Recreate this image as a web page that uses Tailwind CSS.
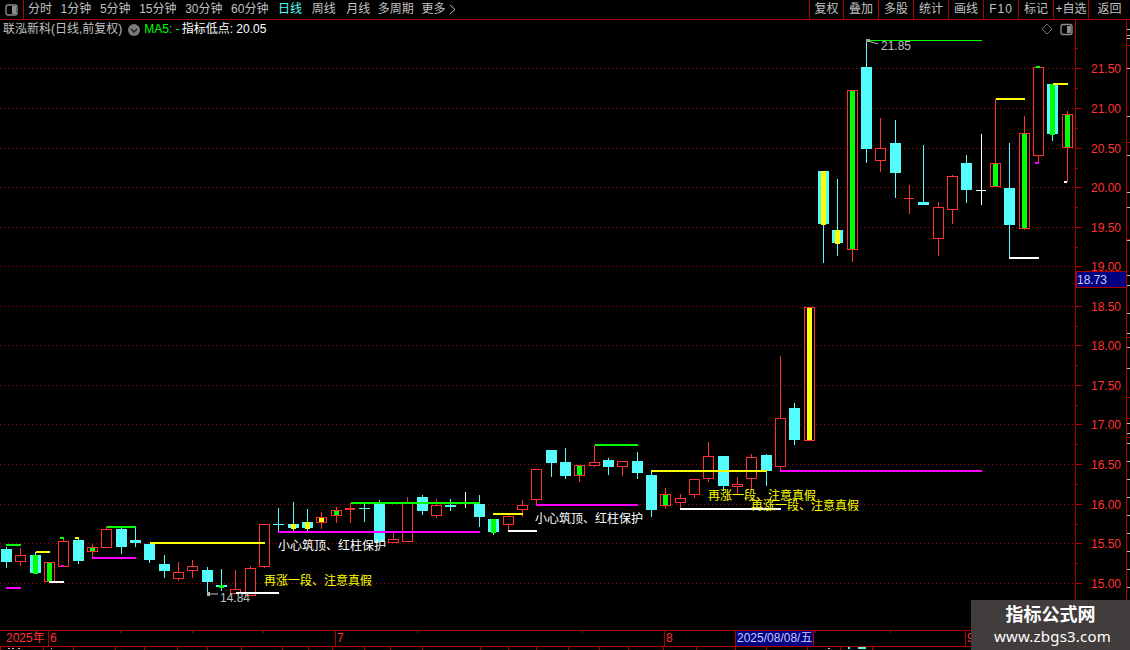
<!DOCTYPE html>
<html lang="en">
<head>
  <meta charset="UTF-8" />
  <title>联泓新科 日线</title>
  <script src="https://cdn.jsdelivr.net/npm/@tailwindcss/browser@4"></script>
</head>
<body class="bg-black font-['Liberation_Sans','Noto_Sans_CJK_SC',sans-serif] text-[12px] text-[#c0c0c0]">
  <div class="relative flex flex-col w-[1130px] h-[650px] overflow-hidden bg-black">

    <!-- top toolbar -->
    <header class="flex h-[20px] shrink-0 items-center border-b border-[#b00000] leading-[19px]">
      <div class="flex h-full w-[24px] shrink-0 items-center justify-center border-r border-[#b00000]">
        <svg width="13" height="12" viewBox="0 0 13 12"><rect x="1" y="1" width="11" height="10" rx="2" fill="none" stroke="#8c8c8c" stroke-width="1.4"/><rect x="7" y="2" width="4" height="8" fill="#8c8c8c"/></svg>
      </div>
      <nav class="flex items-center gap-[8.6px] pl-[4px]">
        <span>分时</span>
        <span>1分钟</span>
        <span>5分钟</span>
        <span>15分钟</span>
        <span>30分钟</span>
        <span>60分钟</span>
        <span class="ml-px text-[#54fcfc]">日线</span>
        <span class="ml-px">周线</span>
        <span class="ml-[2px]">月线</span>
        <span class="-ml-px">多周期</span>
        <span class="-ml-px flex items-center gap-[4px]">更多
          <svg width="7" height="11" viewBox="0 0 7 11"><path d="M1 1l5 4.5L1 10" fill="none" stroke="#c0c0c0"/></svg>
        </span>
      </nav>
      <div class="ml-auto flex h-full border-l border-[#b00000] text-center">
        <span class="w-[34px] border-r border-[#b00000]">复权</span>
        <span class="w-[35px] border-r border-[#b00000]">叠加</span>
        <span class="w-[35px] border-r border-[#b00000]">多股</span>
        <span class="w-[35px] border-r border-[#b00000]">统计</span>
        <span class="w-[35px] border-r border-[#b00000]">画线</span>
        <span class="w-[35px] border-r border-[#b00000] tracking-[1px]">F10</span>
        <span class="w-[35px] border-r border-[#b00000]">标记</span>
        <span class="w-[35px] border-r border-[#b00000] whitespace-nowrap">+自选</span>
        <span class="w-[41px]">返回</span>
      </div>
    </header>

    <!-- chart canvas, drawn in page coordinates -->
    <main class="relative h-[610px] shrink-0">
      <svg id="chart" class="block" width="1130" height="610" viewBox="0 20 1130 610" shape-rendering="crispEdges">
        <g id="grid" shape-rendering="geometricPrecision"></g>
        <g id="candles"></g>
        <g id="signals"></g>

        <g shape-rendering="auto" fill="#c0c0c0">
          <path d="M868 41l10 3" stroke="#c0c0c0" fill="none"/>
          <path d="M207 594h11M207 594l3-2M207 594l3 2" stroke="#c0c0c0" fill="none"/>
          <text x="881" y="50">21.85</text>
          <text x="220" y="602">14.84</text>
          <text x="264" y="585" fill="#ffff00">再涨一段、注意真假</text>
          <text x="278" y="550" fill="#ffffff">小心筑顶、红柱保护</text>
          <text x="535" y="523" fill="#ffffff">小心筑顶、红柱保护</text>
          <text x="708" y="500" fill="#ffff00">再涨一段、注意真假</text>
          <text x="751" y="510" fill="#ffff00">再涨一段、注意真假</text>
          <path d="M1047 24l5 5-5 5-5-5z" fill="none" stroke="#6e6e6e"/>
          <rect x="1061" y="24.5" width="11" height="10" rx="2" fill="none" stroke="#8c8c8c" stroke-width="1.4"/>
          <rect x="1067" y="26" width="4" height="7" fill="#8c8c8c"/>
        </g>

        <g id="axis"></g>
        <rect x="1076" y="271" width="50" height="16" fill="#000080" stroke="#b00000"/>
        <text x="1077" y="284" fill="#c8c8ff" shape-rendering="auto">18.73</text>
      </svg>

      <!-- legend row over the chart -->
      <div class="absolute left-[3px] top-[2px] flex items-center leading-[15px]">
        <span>联泓新科(日线,前复权)</span>
        <svg class="ml-[6px]" width="12" height="12" viewBox="0 0 12 12"><circle cx="6" cy="6" r="6" fill="#7a7a7a"/><path d="M3 5l3 3 3-3" fill="none" stroke="#1c1c1c" stroke-width="1.3"/></svg>
        <span class="ml-[4px] text-[#00ff00]">MA5: -</span>
        <span class="ml-[2px] text-white">指标低点: 20.05</span>
      </div>
    </main>

    <!-- date axis -->
    <footer class="relative flex h-[17px] shrink-0 border-y border-[#b00000] leading-[15px] text-[#ff3232]">
      <div class="w-[49px] border-r border-[#b00000] pl-[6px] whitespace-nowrap">2025年</div>
      <div class="w-[287px] border-r border-[#b00000] pl-[1px]">6</div>
      <div class="w-[329px] border-r border-[#b00000] pl-[1px]">7</div>
      <div class="w-[301px] border-r border-[#b00000] pl-[1px]">8</div>
      <div class="pl-[1px]">9</div>
      <svg class="absolute left-0 top-0" width="1130" height="2" shape-rendering="crispEdges">
        <path d="M120.5 0v2M192.5 0v2M263.5 0v2M417.5 0v2M582.5 0v2M815.5 0v2M890.5 0v2" stroke="#b00000"/>
      </svg>
      <div class="absolute left-[735px] top-0 h-[15px] w-[79px] border-x border-[#b00000] bg-[#000080] pl-px text-[#c8c8ff] whitespace-nowrap">2025/08/08/五</div>
    </footer>
    <svg class="block shrink-0" width="1130" height="3" shape-rendering="crispEdges">
      <path d="M0.5 0v3M43.5 0v3M73.5 0v3M115.5 0v3M144.5 0v3M177.5 0v3M207.5 0v3M241.5 0v3M282.5 0v3M308.5 0v3M332.5 0v3M364.5 0v3M390.5 0v3M422.5 0v3M480.5 0v3M508.5 0v3M536.5 0v3M568.5 0v3M599.5 0v3M628.5 0v3M663.5 0v3M696.5 0v3M735.5 0v3M766.5 0v3M807.5 0v3M840.5 0v3M872.5 0v3" stroke="#b00000"/>
      <path d="M8 1h2M12 1h2M18 1h2M51 1h1M828 1h2" stroke="#c0c0c0"/>
      <path d="M848 1h2M858 1h8" stroke="#54fcfc" stroke-width="2"/>
    </svg>

    <!-- site watermark -->
    <div class="absolute right-0 bottom-0 flex h-[50px] w-[159px] flex-col items-center bg-[#423d3d] text-white">
      <div class="mt-[3px] text-[18px] font-bold leading-[24px]">指标公式网</div>
      <div class="ml-[4px] font-['Noto_Sans',sans-serif] text-[15px] leading-[19px] tracking-[0.2px]">www.zbgs3.com</div>
    </div>
  </div>

  <script>
    const RED = "#ff3232", CYAN = "#54fcfc", GREEN = "#00ff00", YELLOW = "#ffff00", MAGENTA = "#ff00ff", WHITE = "#ffffff";
    const NS = "http://www.w3.org/2000/svg";

    function add(parent, tag, attrs, text) {
      const el = document.createElementNS(NS, tag);
      for (const k in attrs) el.setAttribute(k, attrs[k]);
      if (text) el.textContent = text;
      parent.appendChild(el);
      return el;
    }
    const box = (g, x, y, w, h, fill) => add(g, "rect", { x, y, width: w, height: h, fill });

    // price axis
    const prices = [["21.50",68],["21.00",108],["20.50",148],["20.00",187],["19.50",227],["19.00",266],["18.50",306],
                    ["18.00",345],["17.50",385],["17.00",424],["16.50",464],["16.00",504],["15.50",543],["15.00",583]];
    const grid = document.getElementById("grid");
    const axis = document.getElementById("axis");
    prices.forEach(([label, y], i) => {
      add(grid, "line", { x1: 0, x2: 1075, y1: y + .5, y2: y + .5, stroke: "#a00000", "stroke-dasharray": "1 3" });
      box(axis, 1075, y, 7, 1, "#b00000");
      box(axis, 1075, y + 20, 3, 1, "#b00000");
      add(axis, "text", { x: 1091, y: y + 5, fill: RED, "shape-rendering": "auto" }, label);
    });
    box(axis, 1075, 20, 1, 610, "#b00000");
    box(axis, 1075, 48, 3, 1, "#b00000");
    box(axis, 1126, 20, 1, 610, "#b00000");
    [45, 142, 239, 337, 397, 418, 437].forEach(y => box(axis, 1126, y, 4, 1, "#b00000"));
    [29,35,38,68,116,155,192,207,240,275,285,313,333,347,368,423,433,443,461,479,497,515,533,551,569,587]
      .forEach(y => box(axis, 1127, y, 3, 1, "#c0c0c0"));

    // left, top, bottom, wick top, wick bottom, kind (r hollow red, c cyan, f solid red, w white), inner bar
    const bars = [
      [1,549,562,547,568,"c"],[15,555,562,548,566,"r"],[30,555,573,552,573,"c",GREEN],[44,562,582,562,582,"r",GREEN],
      [58,541,567,538,567,"r"],[73,540,561,537,564,"c"],[87,547,552,544,557,"r",GREEN],[101,529,548,526,548,"r"],
      [116,529,547,528,554,"c"],[130,540,543,527,547,"c"],[144,544,560,544,563,"c"],[159,564,571,555,578,"c"],
      [173,572,579,562,581,"r"],[187,566,571,560,578,"r"],[202,570,582,567,596,"c"],[216,585,587,569,591,"c",GREEN],
      [230,589,594,570,594,"r"],[245,568,596,566,596,"r"],[259,524,567,524,568,"r"],[273,524,525,508,532,"c"],
      [288,524,528,502,532,"c",YELLOW],[302,522,528,509,532,"c",YELLOW],[316,517,523,512,529,"r",YELLOW],[331,510,516,507,523,"r",GREEN],
      [345,508,510,503,523,"f"],[359,508,509,503,522,"c"],[374,504,542,500,542,"c"],[388,539,543,532,543,"r"],
      [402,503,542,497,542,"r"],[417,497,511,495,515,"c"],[431,505,516,499,518,"r"],[445,505,507,499,511,"c"],
      [460,500,500,492,508,"w"],[474,504,517,495,527,"c"],[488,519,532,519,535,"c",GREEN],[503,516,525,513,531,"r"],
      [517,505,510,500,517,"r"],[531,469,500,469,504,"r"],[546,450,463,450,477,"c"],[560,462,476,448,479,"c"],
      [574,465,476,465,482,"r",GREEN],[589,462,466,445,467,"r"],[603,460,467,458,475,"c"],[617,461,467,461,476,"r"],
      [632,461,473,452,479,"c"],[646,475,510,471,517,"c"],[660,494,506,488,509,"r",GREEN],[675,498,503,494,509,"r"],
      [689,479,495,479,498,"r"],[703,456,479,442,482,"r"],[718,456,486,456,491,"c"],[732,484,487,477,495,"r"],
      [746,457,479,454,490,"r"],[761,455,471,454,486,"c"],[775,418,467,356,470,"r"],[789,408,440,403,445,"c"],
      [804,307,441,307,441,"r",YELLOW],[818,171,224,171,263,"c",YELLOW],[832,230,243,179,256,"c",YELLOW],[847,90,250,90,262,"r",GREEN],
      [861,67,149,40,163,"c"],[875,148,161,118,172,"r"],[890,143,173,120,198,"c"],[904,198,199,185,214,"f"],
      [918,202,205,145,205,"c"],[933,207,239,202,256,"r"],[947,176,210,175,224,"r"],[961,163,190,155,203,"c"],
      [976,190,191,134,205,"w"],[990,163,187,99,187,"r",GREEN],[1004,188,225,143,258,"c"],[1019,133,229,116,230,"r",GREEN],
      [1033,67,156,67,163,"r"],[1047,84,134,84,141,"c",GREEN],[1062,114,148,111,182,"r",GREEN]
    ];
    const g = document.getElementById("candles");
    const colors = { r: RED, f: RED, c: CYAN, w: WHITE };
    bars.forEach(([x, top, bot, wt, wb, kind, inner]) => {
      const c = colors[kind], w = kind === "w" || kind === "f" ? 10 : 11;
      box(g, x + 5, wt, 1, wb - wt, c);
      if (kind === "r") {
        add(g, "rect", { x: x + .5, y: top + .5, width: 10, height: bot - top - 1, fill: "#000", stroke: c });
      } else {
        box(g, x, top, w, bot - top, c);
      }
      if (inner) box(g, x + 3, top + (kind === "r" ? 1 : 0), 5, bot - top + (kind === "r" ? -2 : 1), inner);
    });

    // signal lines: x1, x2, y, colour
    const s = document.getElementById("signals");
    [[867,982,40,GREEN,1],[996,1025,98,YELLOW,2],[1053,1068,83,YELLOW,2],[1009,1039,257,WHITE,2],[780,982,470,MAGENTA,2],
     [651,767,470,YELLOW,2],[680,781,508,WHITE,2],[595,638,444,GREEN,2],[536,638,504,MAGENTA,2],[493,523,513,YELLOW,2],
     [508,537,530,WHITE,2],[351,480,502,GREEN,2],[278,480,531,MAGENTA,2],[236,279,592,WHITE,2],[150,265,542,YELLOW,2],
     [107,136,526,GREEN,2],[92,136,557,MAGENTA,2],[36,50,551,YELLOW,2],[49,64,581,WHITE,2],[6,21,544,GREEN,2],[6,21,587,MAGENTA,2]
    ].forEach(([x1, x2, y, c, h]) => box(s, x1, y, x2 - x1, h, c));
    // small end marks on the candles
    [[60,537,4,2,GREEN],[61,565,3,2,MAGENTA],[75,537,4,2,YELLOW],[1036,66,4,2,GREEN],[1035,162,4,2,MAGENTA],
     [1064,181,3,2,WHITE],[866,39,4,3,"#a0a0a0"],[207,592,3,4,"#a0a0a0"]
    ].forEach(([x, y, w, h, c]) => box(s, x, y, w, h, c));
  </script>
</body>
</html>
